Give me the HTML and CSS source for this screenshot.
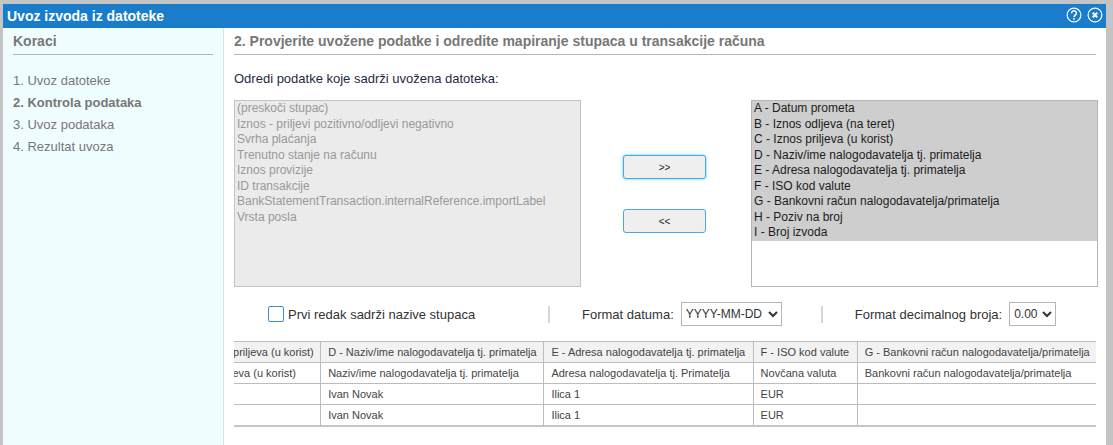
FILE: index.html
```html
<!DOCTYPE html>
<html lang="hr">
<head>
    <meta charset="UTF-8">
    <title>Uvoz izvoda iz datoteke</title>
    <link rel="stylesheet" href="styles.css">
</head>
<body>
    <div class="prozor">
        <div class="naslov">
            <span>Uvoz izvoda iz datoteke</span>
            <div class="ikone">
                <svg width="16" height="16" viewBox="0 0 16 16" fill="none" stroke="#fff">
                    <circle cx="8" cy="8" r="6.9" stroke-width="1.2"/>
                    <path d="M5.6 6.2a2.4 2.4 0 1 1 3.7 2c-.9.6-1.3 1-1.3 2" stroke-width="1.5"/>
                    <path d="M8 11.2v1.6" stroke-width="1.6"/>
                </svg>
                <svg width="16" height="16" viewBox="0 0 16 16" fill="none" stroke="#fff">
                    <circle cx="8" cy="8" r="6.9" stroke-width="1.2"/>
                    <path d="M5.8 5.8l4.4 4.4M10.2 5.8l-4.4 4.4" stroke-width="2"/>
                </svg>
            </div>
        </div>
        <div class="sadrzaj">
            <div class="koraci">
                <h2>Koraci</h2>
                <ul>
                    <li>1. Uvoz datoteke</li>
                    <li class="aktivan">2. Kontrola podataka</li>
                    <li>3. Uvoz podataka</li>
                    <li>4. Rezultat uvoza</li>
                </ul>
            </div>
            <div class="glavni">
                <h2>2. Provjerite uvožene podatke i odredite mapiranje stupaca u transakcije računa</h2>
                <p class="uvod">Odredi podatke koje sadrži uvožena datoteka:</p>

                <div class="mapiranje">
                    <div class="lista lista-lijevo">
                        <div>(preskoči stupac)</div>
                        <div>Iznos - priljevi pozitivno/odljevi negativno</div>
                        <div>Svrha plaćanja</div>
                        <div>Trenutno stanje na računu</div>
                        <div>Iznos provizije</div>
                        <div>ID transakcije</div>
                        <div>BankStatementTransaction.internalReference.importLabel</div>
                        <div>Vrsta posla</div>
                    </div>
                    <div class="gumbi">
                        <button type="button" class="fokus">&gt;&gt;</button>
                        <button type="button">&lt;&lt;</button>
                    </div>
                    <div class="lista lista-desno">
                        <div>A - Datum prometa</div>
                        <div>B - Iznos odljeva (na teret)</div>
                        <div>C - Iznos priljeva (u korist)</div>
                        <div>D - Naziv/ime nalogodavatelja tj. primatelja</div>
                        <div>E - Adresa nalogodavatelja tj. primatelja</div>
                        <div>F - ISO kod valute</div>
                        <div>G - Bankovni račun nalogodavatelja/primatelja</div>
                        <div>H - Poziv na broj</div>
                        <div>I - Broj izvoda</div>
                    </div>
                </div>

                <div class="opcije">
                    <label class="prvi-redak"><span class="kvadrat"></span>Prvi redak sadrži nazive stupaca</label>
                    <span class="crta"></span>
                    <div class="format format-datum">
                        <span>Format datuma:</span>
                        <select class="izbor-datum"><option>YYYY-MM-DD</option></select>
                    </div>
                    <span class="crta"></span>
                    <div class="format format-broj">
                        <span>Format decimalnog broja:</span>
                        <select class="izbor-broj"><option>0.00</option></select>
                    </div>
                </div>

                <div class="tablica-okvir">
                    <table>
                        <thead>
                            <tr>
                                <th class="kol-c">C - Iznos priljeva (u korist)</th>
                                <th class="kol-d">D - Naziv/ime nalogodavatelja tj. primatelja</th>
                                <th class="kol-e">E - Adresa nalogodavatelja tj. primatelja</th>
                                <th class="kol-f">F - ISO kod valute</th>
                                <th class="kol-g">G - Bankovni račun nalogodavatelja/primatelja</th>
                            </tr>
                        </thead>
                        <tbody>
                            <tr>
                                <td>Iznos priljeva (u korist)</td>
                                <td>Naziv/ime nalogodavatelja tj. primatelja</td>
                                <td>Adresa nalogodavatelja tj. Primatelja</td>
                                <td>Novčana valuta</td>
                                <td>Bankovni račun nalogodavatelja/primatelja</td>
                            </tr>
                            <tr>
                                <td></td>
                                <td>Ivan Novak</td>
                                <td>Ilica 1</td>
                                <td>EUR</td>
                                <td></td>
                            </tr>
                            <tr>
                                <td></td>
                                <td>Ivan Novak</td>
                                <td>Ilica 1</td>
                                <td>EUR</td>
                                <td></td>
                            </tr>
                        </tbody>
                    </table>
                </div>
            </div>
        </div>
    </div>
</body>
</html>
```

FILE: styles.css
```css
html, body {
    height: 100%;
}

body {
    margin: 0;
    overflow: hidden;
    background-color: #c4c4c4;
    font-family: "Liberation Sans", Arial, sans-serif;
    font-size: 12px;
    color: #333;
}

.prozor {
    width: 1103px;
    height: 441px;
    margin: 4px 0 0 3px;
    background-color: #fff;
    display: flex;
    flex-direction: column;
}

.naslov {
    height: 24px;
    flex: none;
    background-color: #1a7dcc;
    color: #fff;
    font-size: 14px;
    font-weight: bold;
    padding-left: 4px;
    padding-right: 3px;
    display: flex;
    justify-content: space-between;
    align-items: center;
}

.ikone {
    display: flex;
    gap: 5px;
    margin-top: -2px;
}

.sadrzaj {
    flex: 1;
    display: flex;
    min-height: 0;
}

/* Koraci */
.koraci {
    width: 221px;
    flex: none;
    box-sizing: border-box;
    background-color: #f0fdff;
    border-right: 1px solid #d5e6ea;
    padding: 0 10px;
}

.koraci h2,
.glavni h2 {
    margin: 0;
    height: 26px;
    line-height: 27px;
    font-size: 14px;
    font-weight: bold;
    color: #777;
    border-bottom: 1px solid #b5b5b5;
}

.koraci ul {
    list-style: none;
    margin: 15px 0 0;
    padding: 0;
    font-size: 13px;
    color: #777;
}

.koraci li {
    height: 22px;
    line-height: 22px;
}

.koraci .aktivan {
    font-weight: bold;
}

/* Glavni dio */
.glavni {
    flex: 1;
    min-width: 0;
    padding: 0 10px;
}

.uvod {
    margin: 14px 0 0;
    height: 20px;
    line-height: 20px;
    font-size: 13px;
    color: #1f2a44;
}

.mapiranje {
    display: flex;
    justify-content: space-between;
    margin-top: 11px;
}

.lista {
    box-sizing: border-box;
    height: 187px;
    border: 1px solid #c4c4c4;
    font-size: 12px;
    line-height: 15.5px;
}

.lista-lijevo {
    width: 347px;
    background-color: #ebebeb;
    color: #999;
    padding-left: 2px;
}

.lista-desno {
    width: 347px;
    margin-right: -2px;
    background-color: #fff;
    border-color: #b5b5b5;
    color: #1c1c1c;
}

.lista-desno div {
    background-color: #cecece;
    padding-left: 2px;
}

.gumbi {
    display: flex;
    flex-direction: column;
    gap: 30px;
    padding-top: 55px;
    margin-right: 3px;
}

.gumbi button {
    width: 83px;
    height: 24px;
    padding: 0;
    background-color: #efefef;
    border: 1px solid #4aa8e8;
    border-radius: 3px;
    font-family: inherit;
    font-size: 10px;
    color: #222;
}

.gumbi .fokus {
    box-shadow: 0 0 3px #5cc0fa;
}

.opcije {
    display: flex;
    align-items: center;
    margin-top: 15px;
    height: 24px;
    font-size: 13px;
    color: #333;
}

.prvi-redak {
    display: flex;
    align-items: center;
    margin-left: 34px;
    width: 280px;
    font-size: 13px;
}

.kvadrat {
    box-sizing: border-box;
    width: 16px;
    height: 16px;
    margin-right: 4px;
    border: 1px solid #3d8fc9;
    border-radius: 2px;
    background-color: #fff;
}

.crta {
    width: 2px;
    height: 17px;
    background-color: #d6d6d6;
    flex: none;
}

.format {
    display: flex;
    align-items: center;
    gap: 7px;
}

.format-datum {
    margin-left: 32px;
    margin-right: 39px;
}

.format-broj {
    margin-left: 32px;
}

select {
    box-sizing: border-box;
    height: 24px;
    padding: 0;
    background-color: #fff;
    border: 1px solid #b5b5b5;
    font-family: inherit;
    font-size: 12px;
    color: #333;
}

.izbor-datum {
    width: 101px;
}

.izbor-broj {
    width: 47px;
}

/* Tablica, pomaknuta kao da je scrollana udesno */
.tablica-okvir {
    margin-top: 15px;
    overflow: hidden;
}

table {
    border-collapse: collapse;
    table-layout: fixed;
    width: 917px;
    margin-left: -55px;
    border-bottom: 2px solid #c4c4c4;
    font-size: 11px;
}

th, td {
    height: 20px;
    padding: 0 7px;
    border: 1px solid #bcbcbc;
    border-left: 1px solid #aaa;
    text-align: left;
    font-weight: normal;
    white-space: nowrap;
    overflow: hidden;
    color: #444;
}

th {
    background-color: #f2f2f2;
}

th:first-child, td:first-child {
    border-left: none;
}

th:last-child, td:last-child {
    border-right: none;
}

.kol-c { width: 127px; }
.kol-d { width: 208px; }
.kol-e { width: 194px; }
.kol-f { width: 89px; }
.kol-g { width: 224px; }
```
